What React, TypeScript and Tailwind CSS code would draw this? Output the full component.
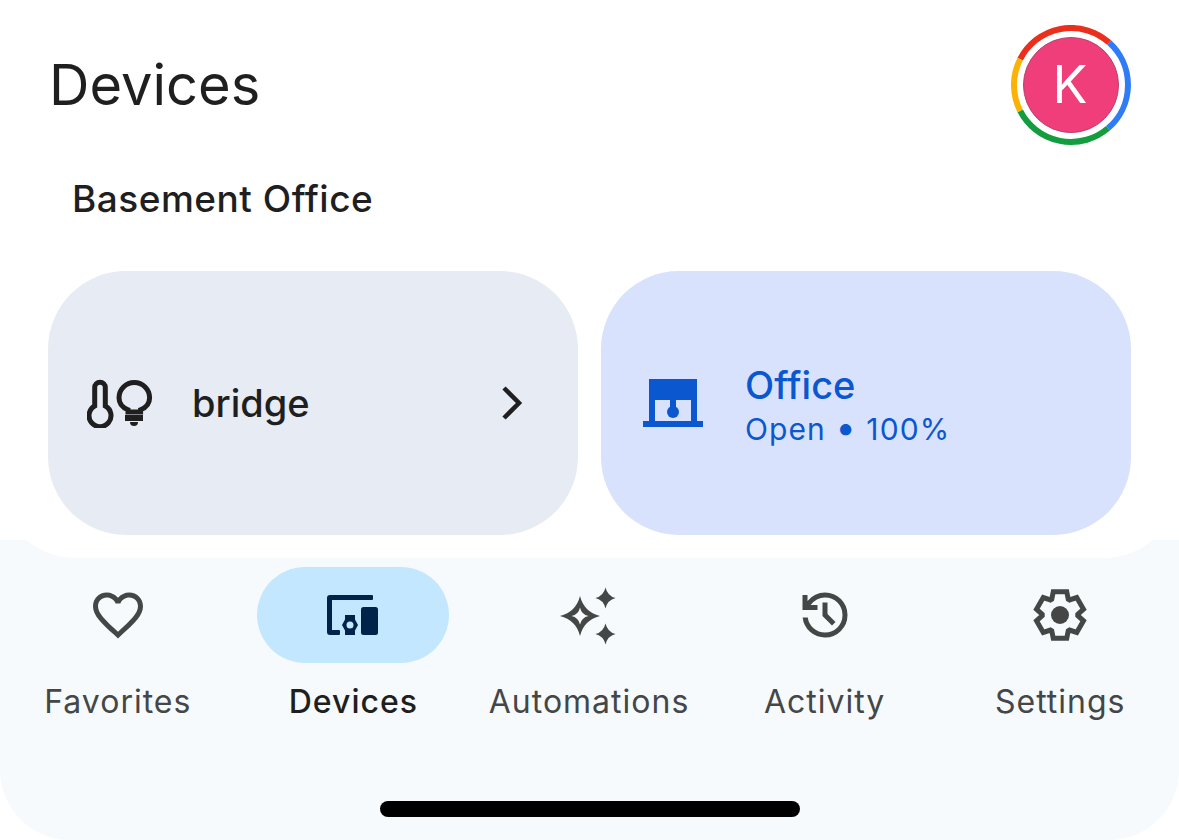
import React from "react";

const Heart = () => (
  <svg width="60" height="60" viewBox="0 0 24 24" fill="#444746">
    <path d="M16.5 3c-1.74 0-3.41.81-4.5 2.09C10.91 3.81 9.24 3 7.5 3 4.42 3 2 5.42 2 8.5c0 3.78 3.4 6.86 8.55 11.54L12 21.35l1.45-1.32C18.6 15.36 22 12.28 22 8.5 22 5.42 19.58 3 16.5 3zm-4.4 15.55l-.1.1-.1-.1C7.14 14.24 4 11.39 4 8.5 4 6.5 5.5 5 7.5 5c1.54 0 3.04.99 3.57 2.36h1.87C13.46 5.99 14.96 5 16.5 5c2 0 3.5 1.5 3.5 3.5 0 2.89-3.14 5.74-7.9 10.05z" />
  </svg>
);

const DevicesIcon = () => (
  <svg width="60" height="60" viewBox="0 0 60 60" fill="#00234a">
    <path d="M4 13a3 3 0 0 1 3-3h42a1 1 0 0 1 1 1v3a1 1 0 0 1-1 1H9v30h7a1 1 0 0 1 1 1v3a1 1 0 0 1-1 1H7a3 3 0 0 1-3-3z" />
    <rect x="38" y="22" width="17" height="28" rx="2.500" />
    <path fillRule="evenodd" d="M22 30h10v4.500l3 5.500-3 5.500V50H22v-4.500L19 40l3-5.500zM27 36.500a3.500 3.500 0 1 0 0 7 3.500 3.500 0 0 0 0-7z" />
  </svg>
);

const Sparkles = () => (
  <svg width="60" height="60" viewBox="0 0 60 60" fill="#444746">
    <g transform="translate(21 31)">
      <path
        fillRule="evenodd"
        d="M0-20Q4-4 20 0 4 4 0 20-4 4-20 0-4-4 0-20zM0-8.500Q-1.500-1.500-8.500 0-1.500 1.500 0 8.500 1.500 1.500 8.500 0 1.500-1.500 0-8.500z"
      />
    </g>
    <path transform="translate(46.500 13)" d="M0-10.500Q2-2 10 0 2 2 0 10.500-2 2-10 0-2-2 0-10.500z" />
    <path transform="translate(46.500 49)" d="M0-10.500Q2-2 10 0 2 2 0 10.500-2 2-10 0-2-2 0-10.500z" />
  </svg>
);

const History = () => (
  <svg width="60" height="60" viewBox="0 0 24 24" fill="#444746">
    <path d="M12 21q-3.450 0-6.012-2.288T3.050 13H5.100q.35 2.600 2.313 4.300T12 19q2.925 0 4.963-2.037T19 12t-2.037-4.962T12 5q-1.725 0-3.225.8T6.250 8H9v2H3V4h2v2.350q1.275-1.600 3.113-2.475T12 3q3.750 0 6.375 2.625T21 12t-2.625 6.375T12 21m2.800-4.800L11 12.400V7h2v4.600l3.200 3.200z" />
  </svg>
);

const gearPoints = (() => {
  const pts: string[] = [];
  for (let i = 0; i < 6; i++) {
    const a = (Math.PI / 3) * i;
    const local: [number, number][] = [
      [-3.3, -6.3],
      [-2.7, -9.3],
      [2.7, -9.3],
      [3.3, -6.3],
    ];
    for (const [x, y] of local) {
      const px = 12 + x * Math.cos(a) - y * Math.sin(a);
      const py = 12 + x * Math.sin(a) + y * Math.cos(a);
      pts.push(`${px.toFixed(2)},${py.toFixed(2)}`);
    }
  }
  return pts.join(" ");
})();

const Gear = () => (
  <svg width="60" height="60" viewBox="0 0 24 24">
    <polygon points={gearPoints} fill="none" stroke="#444746" strokeWidth="2" strokeLinejoin="miter" />
    <circle cx="12" cy="12" r="3.600" fill="#444746" />
  </svg>
);

const ThermoBulb = () => (
  <svg width="70" height="50" viewBox="0 0 70 50" fill="none" stroke="#1f1f1f" strokeWidth="5">
    <path d="M6.700 26V7.500a5.300 5.300 0 0 1 10.600 0V26a11 11 0 1 1-10.600 0z" transform="translate(1 2)" />
    <path d="M41 33.500v-2.200c-5-2-9-5-9-12a15.300 15.300 0 0 1 30.600 0c0 7-4 10-9 12v2.200z" transform="translate(0 .5)" />
    <rect x="38" y="37" width="18" height="6" fill="#1f1f1f" stroke="none" />
    <path d="M43 44h8a4 4 0 0 1-8 0z" fill="#1f1f1f" stroke="none" />
  </svg>
);

const Shutter = () => (
  <svg width="60" height="48" viewBox="0 0 60 48" fill="#0b57d0">
    <path fillRule="evenodd" d="M6 0h48v42h6v6H0v-6h6zM12 21v21h36V21z" />
    <rect x="27" y="20" width="6" height="12" />
    <circle cx="30" cy="33" r="6" />
  </svg>
);

const Avatar = () => (
  <div className="relative flex h-[120px] w-[120px] items-center justify-center">
    <svg width="120" height="120" viewBox="0 0 120 120" fill="none" strokeWidth="6" className="absolute inset-0">
      <path d="M9.200 34.100A57 57 0 0 1 98.100 17.600" stroke="#ea2f1c" />
      <path d="M98.100 17.600A57 57 0 0 1 97 103.300" stroke="#2f7cf6" />
      <path d="M97 103.300A57 57 0 0 1 9.200 85.900" stroke="#149c3f" />
      <path d="M9.200 85.900A57 57 0 0 1 9.200 34.100" stroke="#fbb204" />
    </svg>
    <div className="flex h-[96px] w-[96px] items-center justify-center rounded-full border border-[#b8426f] bg-[#ef3e7a] pr-[2px] text-[52px] leading-none text-white">
      K
    </div>
  </div>
);

const navItems = [
  { label: "Favorites", icon: <Heart /> },
  { label: "Devices", icon: <DevicesIcon />, active: true },
  { label: "Automations", icon: <Sparkles /> },
  { label: "Activity", icon: <History /> },
  { label: "Settings", icon: <Gear /> },
];

export default function App() {
  return (
    <div className="h-[840px] w-[1179px] overflow-hidden bg-white font-['Inter',sans-serif]">
      <div className="relative z-10 h-[558px] rounded-b-[75px] bg-white">
        <div className="flex items-start justify-between pl-[49px] pr-[48px] pt-[25px]">
          <h1 className="pt-[28px] text-[56px] leading-[64px] font-normal text-[#1f1f1f]">Devices</h1>
          <Avatar />
        </div>
        <div className="mt-[31px] pl-[72px] text-[37px] leading-[46px] tracking-[0.5px] font-medium text-[#1f1f1f]">
          Basement Office
        </div>
        <div className="mt-[49px] grid grid-cols-2 gap-[23px] pl-[48px] pr-[48px]">
          <div className="flex h-[264px] items-center rounded-[78px] bg-[#e7ebf4] pl-[39px] pr-[53px]">
            <ThermoBulb />
            <span className="ml-[35px] flex-1 text-[38px] font-medium text-[#1f1f1f]">bridge</span>
            <svg width="26" height="36" viewBox="0 0 26 36" fill="none" stroke="#1f1f1f" strokeWidth="4.500">
              <path d="M5 3l15 15L5 33" />
            </svg>
          </div>
          <div className="flex h-[264px] items-center rounded-[78px] bg-[#d9e2fd] pl-[42px]">
            <Shutter />
            <div className="ml-[42px] flex flex-col pt-[4px] text-[#0b57d0]">
              <span className="text-[38px] leading-[44px] font-medium">Office</span>
              <span className="mt-[2px] text-[30px] leading-[36px] tracking-[1.1px]">
                Open <span className="text-[36px] leading-none">•</span> 100%
              </span>
            </div>
          </div>
        </div>
      </div>
      <div className="mt-[-18px] h-[300px] rounded-b-[70px] bg-[#f6fafd] pt-[27px]">
        <div className="grid w-[1178px] grid-cols-5">
          {navItems.map((item) => (
            <div key={item.label} className="flex flex-col items-center">
              <div
                className={
                  item.active
                    ? "flex h-[96px] w-[192px] items-center justify-center rounded-full bg-[#c2e7ff]"
                    : "flex h-[96px] w-[192px] items-center justify-center"
                }
              >
                {item.icon}
              </div>
              <span
                className={
                  item.active
                    ? "mt-[20px] text-[32px] leading-[38px] tracking-[1px] font-medium text-[#1f1f1f]"
                    : "mt-[20px] text-[32px] leading-[38px] tracking-[1px] text-[#444746]"
                }
              >
                {item.label}
              </span>
            </div>
          ))}
        </div>
        <div className="mt-[80px] flex justify-center">
          <div className="h-[16px] w-[420px] rounded-full bg-black" />
        </div>
      </div>
    </div>
  );
}
